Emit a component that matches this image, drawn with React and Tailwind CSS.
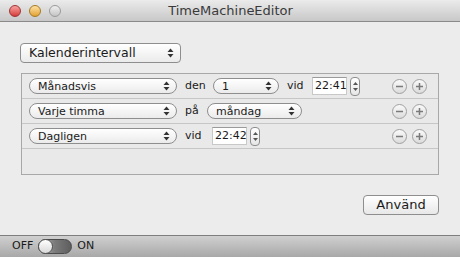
import React from 'react';

const font = { fontFamily: '"DejaVu Sans", "Liberation Sans", sans-serif' };

function Arrows() {
  return (
    <svg width="7" height="10" viewBox="0 0 7 10" className="shrink-0">
      <path d="M3.5 0.5 L6.5 4 H0.5 Z" fill="#333" />
      <path d="M3.5 9.5 L6.5 6 H0.5 Z" fill="#333" />
    </svg>
  );
}

// rounded pop-up button (pill for the rows, rectangle for the top one)
function Popup({ label, width, big = false }) {
  return (
    <div
      className={`flex items-center justify-between shrink-0 pl-[8px] pr-[6px] border border-[#8e8e8e] bg-gradient-to-b from-white to-[#ebebeb] text-[#1a1a1a] ${big ? 'h-[20px] rounded-[4px] text-[12.5px]' : 'h-[16px] rounded-full text-[11px]'}`}
      style={{ width }}
    >
      <span className="leading-none">{label}</span>
      <Arrows />
    </div>
  );
}

function Stepper() {
  return (
    <div className="w-[10px] h-[19px] rounded-[4px] border border-[#8e8e8e] bg-gradient-to-b from-white to-[#e6e6e6] flex flex-col items-center justify-center gap-[3px]">
      <svg width="5" height="3" viewBox="0 0 5 3"><path d="M2.5 0 L5 3 H0 Z" fill="#555" /></svg>
      <svg width="5" height="3" viewBox="0 0 5 3"><path d="M2.5 3 L5 0 H0 Z" fill="#555" /></svg>
    </div>
  );
}

function TimeField({ value }) {
  return (
    <div className="flex items-center gap-[3px] shrink-0">
      <div className="w-[35px] h-[18px] bg-white border border-[#c8c8c8] border-t-[#9a9a9a] flex items-center pl-[2px] text-[11px] text-[#1a1a1a]">
        {value}
      </div>
      <Stepper />
    </div>
  );
}

function RoundBtn({ plus }) {
  return (
    <div className="w-[15px] h-[15px] rounded-full border border-[#a0a0a0] bg-gradient-to-b from-[#fafafa] to-[#dcdcdc] flex items-center justify-center">
      <svg width="9" height="9" viewBox="0 0 9 9">
        <rect x="1" y="3.75" width="7" height="1.5" fill="#7a7a7a" />
        {plus && <rect x="3.75" y="1" width="1.5" height="7" fill="#7a7a7a" />}
      </svg>
    </div>
  );
}

function Label({ text, width }) {
  return (
    <span className="text-[11px] text-[#1a1a1a] pl-[8px] shrink-0" style={{ width }}>
      {text}
    </span>
  );
}

function Row({ children }) {
  return (
    <div className="h-[25px] flex items-center pl-[7px] pr-[11px] border-b border-[#c6c6c6]">
      {children}
      <div className="flex items-center gap-[5px] ml-auto">
        <RoundBtn />
        <RoundBtn plus />
      </div>
    </div>
  );
}

function Light({ from, to, border }) {
  return (
    <div className={`w-[12px] h-[12px] rounded-full border ${border} bg-gradient-to-b ${from} ${to}`} />
  );
}

export default function App() {
  return (
    <div className="w-[460px] h-[257px] flex flex-col bg-[#ececec] overflow-hidden" style={font}>
      {/* Title bar */}
      <div className="h-[22px] shrink-0 flex items-center bg-gradient-to-b from-[#ebebeb] to-[#c8c8c8] border-b border-[#8a8a8a]">
        <div className="flex items-center gap-[8px] pl-[9px]">
          <Light from="from-[#f7a0a0]" to="to-[#d43a3a]" border="border-[#a13333]" />
          <Light from="from-[#fde2a0]" to="to-[#e3a22a]" border="border-[#a57a24]" />
          <Light from="from-[#f0f0f0]" to="to-[#c4c4c4]" border="border-[#9a9a9a]" />
        </div>
        <div className="flex-1 text-center text-[13px] text-[#3a3a3a] pr-[60px]">TimeMachineEditor</div>
      </div>

      {/* Content */}
      <div className="flex-1 flex flex-col pl-[20px] pr-[21px] pt-[21px]">
        <Popup label="Kalenderintervall" width={161} big />
        <div className="mt-[10px] h-[102px] border border-[#a8a8a8] bg-[#e9e9e9] ml-[1px]">
          <Row>
            <Popup label="Månadsvis" width={148} />
            <Label text="den" width={36} />
            <Popup label="1" width={66} />
            <Label text="vid" width={33} />
            <TimeField value="22:41" />
          </Row>
          <Row>
            <Popup label="Varje timma" width={148} />
            <Label text="på" width={30} />
            <Popup label="måndag" width={95} />
          </Row>
          <Row>
            <Popup label="Dagligen" width={148} />
            <Label text="vid" width={35} />
            <TimeField value="22:42" />
          </Row>
        </div>
        <div className="flex justify-end mt-[20px]">
          <div className="w-[76px] h-[20px] rounded-[4px] border border-[#8e8e8e] bg-gradient-to-b from-white to-[#e8e8e8] flex items-center justify-center text-[13px] text-[#1a1a1a]">
            Använd
          </div>
        </div>
      </div>

      {/* Bottom bar */}
      <div className="h-[22px] shrink-0 flex items-center gap-[5px] pl-[12px] bg-gradient-to-b from-[#d0d0d0] to-[#a8a8a8] border-t border-[#7e7e7e] text-[11px] text-[#1a1a1a]">
        <span>OFF</span>
        <div className="w-[34px] h-[15px] rounded-full border border-[#4a4a4a] bg-gradient-to-r from-[#bdbdbd] via-[#7a7a7a] to-[#5e5e5e] flex items-center">
          <div className="w-[15px] h-[15px] -ml-[1px] rounded-full border border-[#555] bg-gradient-to-b from-white to-[#d9d9d9]" />
        </div>
        <span>ON</span>
      </div>
    </div>
  );
}
